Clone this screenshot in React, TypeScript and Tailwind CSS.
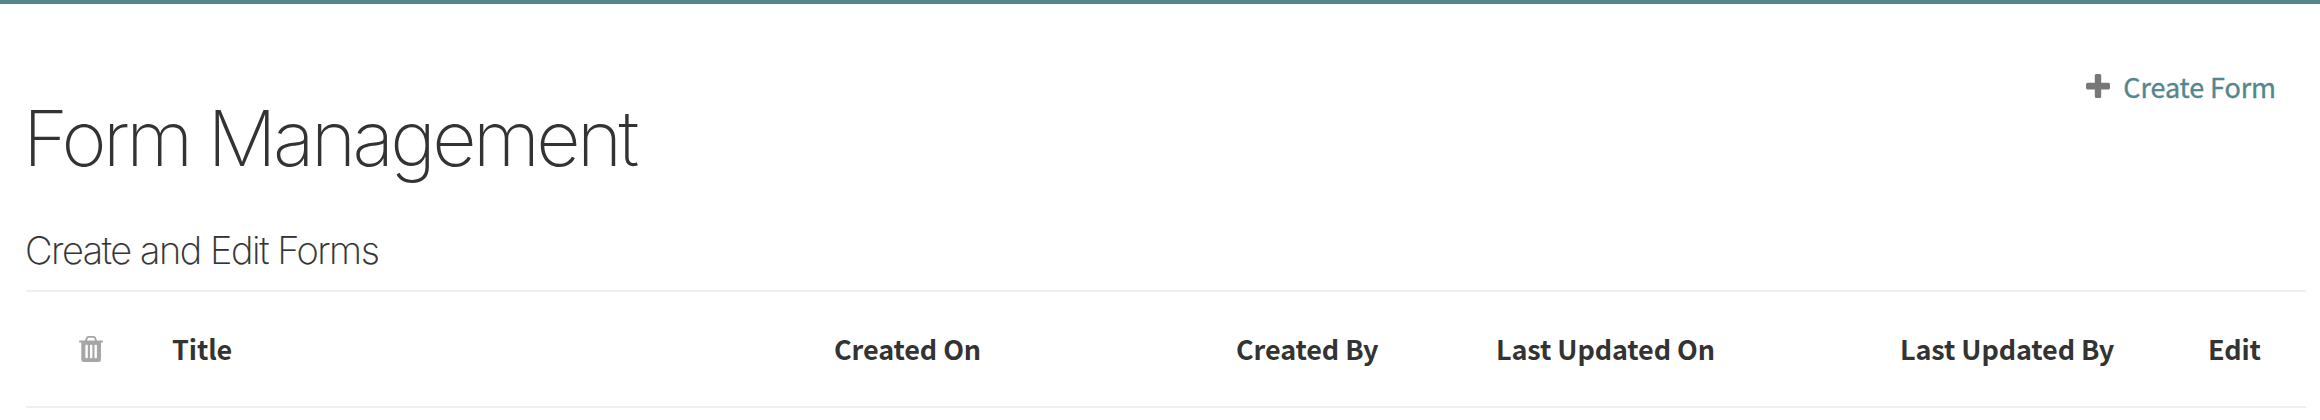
const columns = ['Title', 'Created On', 'Created By', 'Last Updated On', 'Last Updated By', 'Edit'];

function PlusIcon() {
  return (
    <svg width="24" height="24" viewBox="0 0 24 24" fill="#777" aria-hidden="true">
      <path d="M10.2 0h3.6Q15.2 0 15.2 1.6V8.8h7.2Q24 8.8 24 10.4v3.4q0 1.6-1.6 1.6h-7.2v7q0 1.6-1.4 1.6h-3.6q-1.4 0-1.4-1.6v-7H1.6Q0 15.4 0 13.8v-3.4Q0 8.8 1.6 8.8h7.2V1.6Q8.8 0 10.2 0Z" />
    </svg>
  );
}

function TrashIcon() {
  return (
    <svg width="24" height="26" viewBox="0 0 24 26" fill="#a6a6a6" aria-hidden="true">
      <path
        fillRule="evenodd"
        d="M6 4.6 7 1.8Q7.6 0 9.3 0h5.4q1.7 0 2.3 1.8l1 2.8h5.2q.8 0 .8.9t-.8 1H22v17Q22 26 19.6 26H4.9Q2.3 26 2.3 23.5v-17H.8Q0 6.5 0 5.5t.8-.9H6Zm2 0h8l-.7-2q-.3-.9-1.1-.9H9.8q-.8 0-1.1.9L8 4.6ZM6.4 9.6v12q0 .6.7.6h1.1q.6 0 .6-.6v-12q0-.8-.6-.8H7.1q-.7 0-.7.8Zm4.6 0v12q0 .6.6.6h1.1q.7 0 .7-.6v-12q0-.8-.7-.8h-1.1q-.6 0-.6.8Zm4.5 0v12q0 .6.7.6h1.1q.6 0 .6-.6v-12q0-.8-.6-.8h-1.1q-.7 0-.7.8Z"
      />
    </svg>
  );
}

export default function App() {
  return (
    <main className="h-[420px] border-t-4 border-[#54878d] bg-white pl-[26px] pr-[14px] font-['Noto_Sans_CJK_SC',sans-serif] text-[27px] text-[#333]">
      <header className="flex h-[214px] justify-between">
        <h1 className="-ml-[3px] pt-[94px] font-['Inter',sans-serif] text-[77px] leading-[80px] font-extralight tracking-[-3.6px] whitespace-nowrap">
          Form Management
        </h1>
        <a href="#" className="mt-[62px] mr-[30px] flex h-10 items-center gap-[13px] leading-10 tracking-[-0.1px] text-[#54878d] [-webkit-text-stroke:0.35px_#54878d]">
          <PlusIcon />
          <span className="pt-0.5">Create Form</span>
        </a>
      </header>
      <h2 className="-ml-px h-[72px] pt-[12px] font-['Inter',sans-serif] text-[38px] leading-[40px] font-extralight tracking-[-1.45px] [-webkit-text-stroke:0.2px_#333]">
        Create and Edit Forms
      </h2>
      <div className="grid h-[118px] grid-cols-[146px_662px_402px_260px_404px_308px_1fr] items-center border-y-2 border-[#ebf0f0] leading-10 font-bold tracking-[-0.1px] whitespace-nowrap">
        <button type="button" aria-label="Delete" className="pl-[53px]">
          <TrashIcon />
        </button>
        {columns.map((column) => (
          <span key={column}>{column}</span>
        ))}
      </div>
    </main>
  );
}
